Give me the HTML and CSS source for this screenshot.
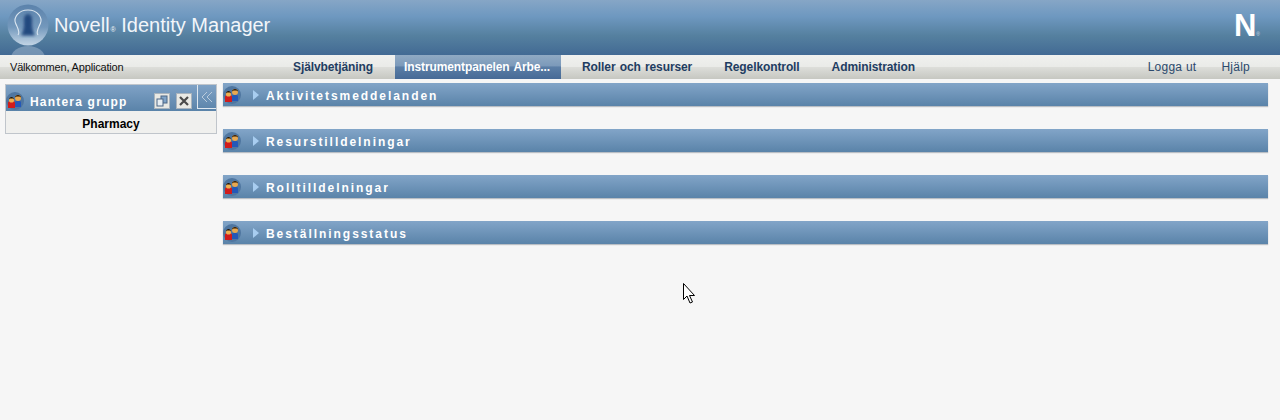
FILE: index.html
```html
<!DOCTYPE html>
<html lang="sv">
<head>
  <meta charset="UTF-8">
  <title>Novell Identity Manager</title>
  <link rel="stylesheet" href="styles.css">
</head>
<body>
  <svg width="0" height="0" class="defs">
    <defs>
      <linearGradient id="discFill" x1="0" y1="0" x2="0" y2="1">
        <stop offset="0" stop-color="#5b82ab"/>
        <stop offset="0.55" stop-color="#7398bc"/>
        <stop offset="1" stop-color="#c3d5e5"/>
      </linearGradient>
      <filter id="soft"><feGaussianBlur stdDeviation="1.800"/></filter>
      <symbol id="people" viewBox="0 0 18 18">
        <circle cx="9" cy="9" r="9" fill="#4f76a0"/>
        <path d="M9 15V10.500c0-1.200 1-1.500 3-1.500s3 .3 3 1.500V15z" fill="#2458b8"/>
        <circle cx="12" cy="6" r="3" fill="#e8a850"/>
        <path d="M9 5.500C9 2 15 2 15 5.500l-1.500-1h-3z" fill="#2c1a08"/>
        <path d="M2 16v-5c0-1.500 1.200-2 3.500-2s3.500 .5 3.500 2v5z" fill="#d01c1c"/>
        <circle cx="5.500" cy="8" r="2.600" fill="#f0b050"/>
        <path d="M3 7.500c0-3.400 5-3.400 5 0l-1-1H4z" fill="#1e1206"/>
      </symbol>
    </defs>
  </svg>

  <header class="banner">
    <div class="brand">
      <svg class="logo" width="52" height="55" viewBox="0 0 52 55">
        <ellipse cx="28" cy="58" rx="17" ry="12" fill="#a3bad0" opacity="0.5"/>
        <circle cx="28" cy="25" r="20.500" fill="url(#discFill)"/>
        <path d="M28 14c3.500 0 4.500 4 4 8.500s1 9 3 13H21c2-4 3.500-8.500 3-13s.5-8.500 4-8.500z" fill="#24487f" filter="url(#soft)"/>
        <path d="M18 35c2.500-3 -.5-7-2.500-12S18 10 28 10s14.500 8 12.500 13-5 9-2.500 12" fill="none" stroke="#dbe6f0" stroke-width="1.100"/>
      </svg>
      <span class="brand-name">Novell<small>®</small> Identity Manager</span>
    </div>
    <div class="n-mark">N<small>®</small></div>
  </header>

  <nav class="menubar">
    <span class="welcome">Välkommen, Application</span>
    <div class="tabs">
      <a class="tab">Självbetjäning</a>
      <a class="tab active">Instrumentpanelen Arbe...</a>
      <a class="tab">Roller och resurser</a>
      <a class="tab">Regelkontroll</a>
      <a class="tab">Administration</a>
    </div>
    <div class="links">
      <a>Logga ut</a>
      <a>Hjälp</a>
    </div>
  </nav>

  <main class="content">
    <aside class="side">
      <div class="side-head">
        <svg class="people" width="18" height="18"><use href="#people"/></svg>
        <span class="side-title">Hantera grupp</span>
        <button class="tool">
          <svg width="12" height="12" viewBox="0 0 12 12">
            <rect x="5" y="1" width="6" height="7" fill="#7fa3c7" stroke="#4c6785"/>
            <rect x="1" y="4" width="6" height="7" fill="#e8eef3" stroke="#4c6785"/>
          </svg>
        </button>
        <button class="tool">
          <svg width="12" height="12" viewBox="0 0 12 12">
            <path d="M2 2l8 8M10 2l-8 8" stroke="#4a4a4a" stroke-width="2.200"/>
          </svg>
        </button>
        <div class="collapse">
          <svg width="14" height="12" viewBox="0 0 14 12">
            <path d="M7 1L2 6l5 5M12 1L7 6l5 5" fill="none" stroke="#b9cbdc"/>
          </svg>
        </div>
      </div>
      <div class="side-body">Pharmacy</div>
    </aside>

    <section class="sections">
      <div class="section">
        <svg class="people" width="18" height="18"><use href="#people"/></svg>
        <span class="arrow"></span>
        <span class="section-title">Aktivitetsmeddelanden</span>
      </div>
      <div class="section">
        <svg class="people" width="18" height="18"><use href="#people"/></svg>
        <span class="arrow"></span>
        <span class="section-title">Resurstilldelningar</span>
      </div>
      <div class="section">
        <svg class="people" width="18" height="18"><use href="#people"/></svg>
        <span class="arrow"></span>
        <span class="section-title">Rolltilldelningar</span>
      </div>
      <div class="section">
        <svg class="people" width="18" height="18"><use href="#people"/></svg>
        <span class="arrow"></span>
        <span class="section-title">Beställningsstatus</span>
      </div>
    </section>
  </main>

  <svg class="pointer" width="14" height="23" viewBox="0 0 14 23">
    <path d="M1.500 1.500v16l3.500-3.500 3 7 2.500-1-3-6.500h5z" fill="#fff" stroke="#000"/>
  </svg>
</body>
</html>
```

FILE: styles.css
```css
html, body { margin: 0; padding: 0; }
body { height: 420px; overflow: hidden; background: #f6f6f6; font-family: "Liberation Sans", Arial, sans-serif; }
.defs { position: absolute; }

.banner { height: 55px; display: flex; justify-content: space-between; background: linear-gradient(#86a6c6 0, #6e98c0 30%, #55809f 65%, #426a94 100%); overflow: hidden; }
.brand { display: flex; align-items: center; }
.logo { flex: none; }
.brand-name { margin: 0 0 5px 2px; font-size: 20px; color: #f2f6fa; }
.brand-name small { font-size: 7px; margin-left: 1px; }
.n-mark { margin: 8px 20px 0 0; font-size: 31px; line-height: 36px; font-weight: bold; color: #fff; }
.n-mark small { font-size: 5px; font-weight: normal; color: #c9d8e6; }

.menubar { height: 24px; display: flex; align-items: center; background: linear-gradient(#f0f1ef 0, #eaebe8 48%, #dcddd9 52%, #c6c7c1 100%); font-size: 11px; }
.welcome { width: 283px; padding-left: 10px; box-sizing: border-box; color: #111; letter-spacing: -0.18px; }
.tabs { display: flex; height: 24px; }
.tab { display: flex; align-items: center; padding: 0 10px; margin-right: 12px; font-size: 12px; font-weight: bold; color: #1f3d62; letter-spacing: -0.1px; word-spacing: 1px; }
.tab.active { padding: 0 11px 0 9px; margin-right: 11px; background: linear-gradient(#90aac4 0, #7c9aba 45%, #5b7ea6 50%, #476a96 100%); color: #fff; }
.links { margin-left: auto; display: flex; gap: 25px; padding-right: 30px; font-size: 12px; color: #2c4a6c; letter-spacing: 0.25px; }

.content { display: flex; padding: 4px 12px 0 5px; }
.side { width: 212px; height: 50px; margin-top: 1px; box-sizing: border-box; border: 1px solid #c0c5cb; flex: none; }
.side-head { height: 26px; box-sizing: border-box; padding-top: 5px; display: flex; align-items: center; background: linear-gradient(#7fa2c6, #5a83a9); position: relative; }
.side-head .people { flex: none; }
.side-title { margin-left: 6px; margin-top: 2px; width: 124px; font-size: 12px; font-weight: bold; color: #fff; letter-spacing: 1.200px; white-space: nowrap; }
.tool { width: 16px; height: 16px; padding: 0; margin-right: 6px; border: 1px solid #aab4bd; background: #e9e9e4; display: flex; align-items: center; justify-content: center; flex: none; }
.collapse { position: absolute; right: 0; top: 0; width: 18px; height: 23px; border-left: 1px solid #dfe8f0; border-bottom: 1px solid #dfe8f0; display: flex; align-items: center; justify-content: center; }
.side-body { height: 22px; line-height: 26px; text-align: center; font-size: 12px; font-weight: bold; color: #000; background: #f0f0ee; }

.sections { flex: 1; margin-left: 6px; display: flex; flex-direction: column; gap: 23px; }
.section { height: 23px; box-sizing: border-box; padding-top: 1px; display: flex; align-items: center; background: linear-gradient(#82a5c8, #5a83a9); box-shadow: 0 1px 1px #b9bec4; }
.section .people { flex: none; }
.arrow { width: 0; height: 0; margin-left: 12px; border-left: 6px solid #a8cdf0; border-top: 5px solid transparent; border-bottom: 5px solid transparent; }
.section-title { margin-left: 7px; margin-top: 2px; font-size: 12px; font-weight: bold; color: #fff; letter-spacing: 1.950px; }

.pointer { position: absolute; left: 682px; top: 282px; }
```
